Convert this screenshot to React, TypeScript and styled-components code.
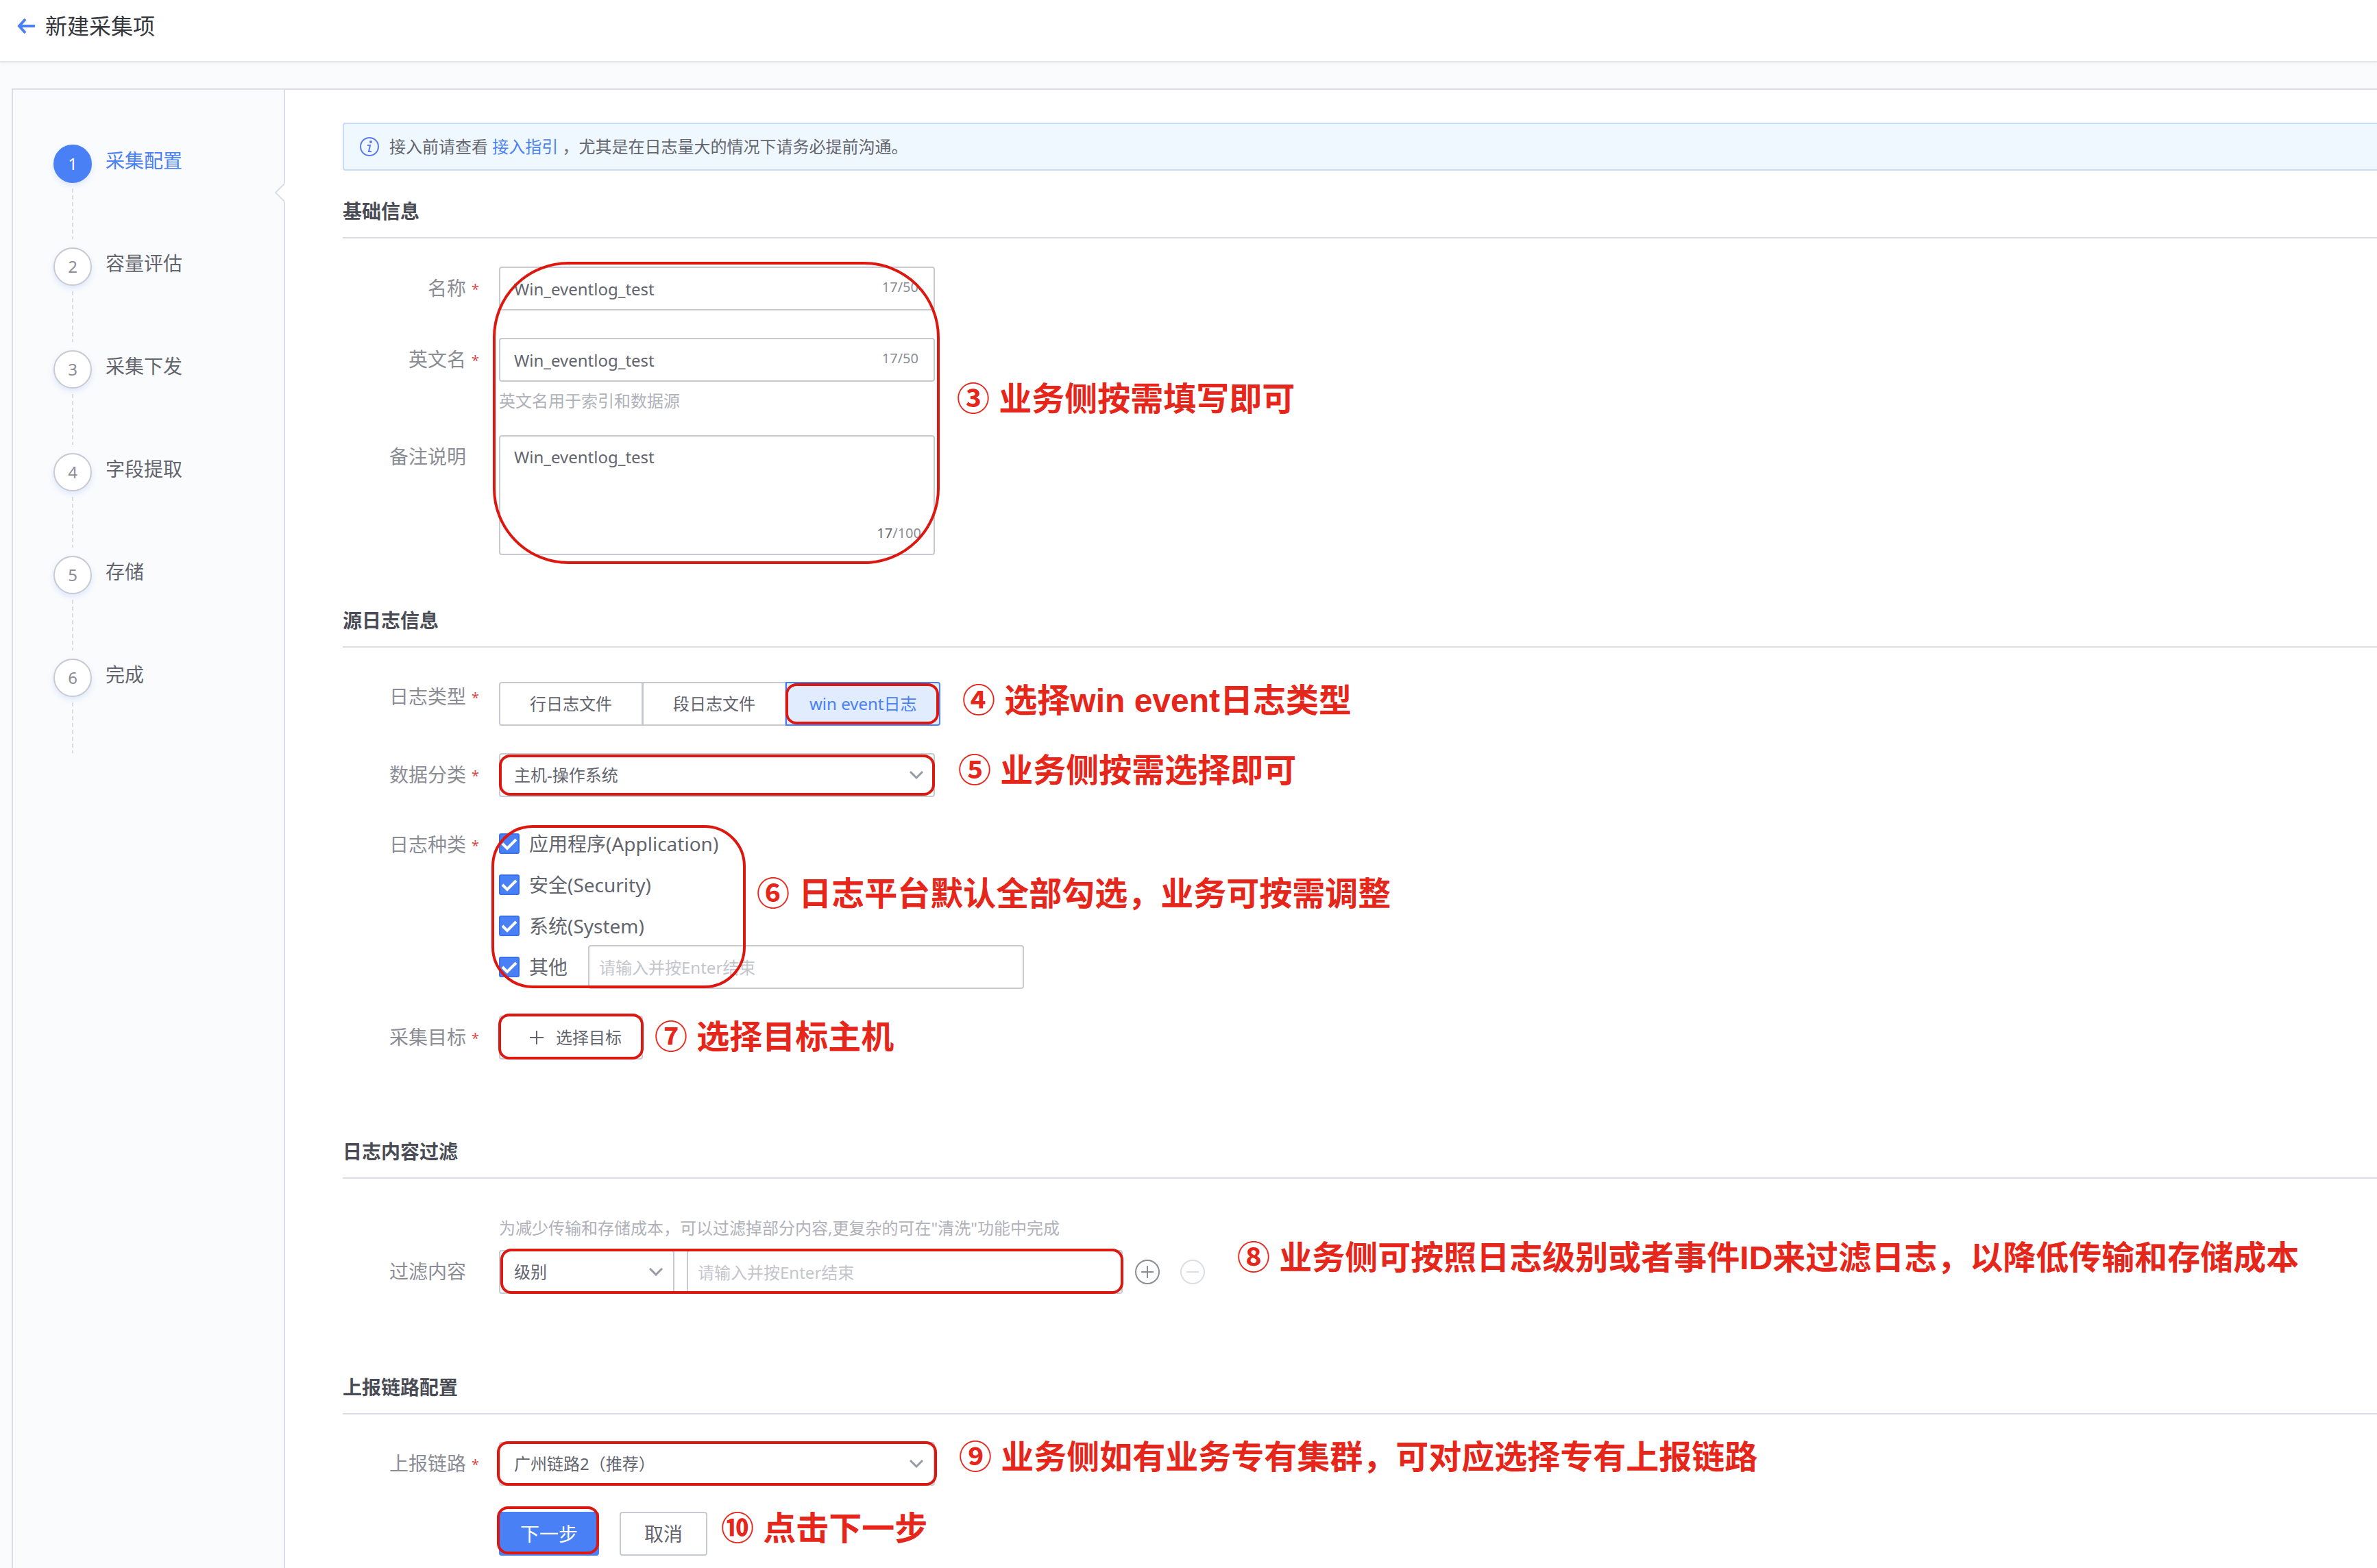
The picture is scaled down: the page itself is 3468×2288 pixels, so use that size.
import React from "react";
import styled, { createGlobalStyle, css } from "styled-components";

const color = {
  primary: "#4a80f5",
  primaryDark: "#3a70e8",
  text: "#63656e",
  heading: "#4a4c55",
  label: "#8b8d95",
  hint: "#b0b2ba",
  placeholder: "#c4c6cc",
  border: "#c8cad2",
  line: "#dcdee5",
  page: "#fafbfd",
  mark: "#dc1810",
};

const size = { counter: "20px", small: "24px", base: "28px", title: "32px", note: "48px" };

const GlobalStyle = createGlobalStyle`
  *, *::before, *::after { box-sizing: border-box; }
  body {
    margin: 0;
    background: ${color.page};
    color: ${color.text};
    font-family: "Noto Sans", "Noto Sans CJK SC", sans-serif;
    font-size: ${size.small};
    line-height: 32px;
    overflow-x: hidden;
  }
  button, input, select, textarea { font: inherit; color: inherit; }
`;

const Header = styled.header`
  display: flex;
  align-items: center;
  gap: 14px;
  height: 91px;
  padding: 0 24px 14px;
  background: #fff;
  border-bottom: 2px solid #e4e5e8;
  box-shadow: 0 2px 4px rgba(0, 0, 0, 0.04);
`;

const BackButton = styled.button`
  display: flex;
  padding: 0;
  border: 0;
  background: none;
  color: ${color.primary};
`;

const PageTitle = styled.h1`
  margin: 0;
  color: #36373d;
  font-size: ${size.title};
  font-weight: 400;
  line-height: 40px;
`;

const Panel = styled.div`
  display: flex;
  min-height: calc(100vh - 129px);
  margin: 38px 0 0 17px;
  border: solid ${color.line};
  border-width: 2px 0 0 2px;
`;

const Sidebar = styled.nav`
  position: relative;
  flex: 0 0 397px;
  padding: 80px 0 0 59px;
  border-right: 2px solid ${color.line};
`;

const Notch = styled.svg`
  position: absolute;
  top: 136px;
  right: -2px;
`;

const StepList = styled.ol`
  margin: 0;
  padding: 0;
  list-style: none;
`;

const Step = styled.li`
  display: grid;
  grid-template-columns: 56px 1fr;
  grid-template-rows: 56px 78px;
  row-gap: 8px;
  column-gap: 20px;
  height: 150px;
`;

const StepDot = styled.span<{ $active: boolean }>`
  display: flex;
  align-items: center;
  justify-content: center;
  border: 2px solid ${(p) => (p.$active ? color.primary : color.border)};
  border-radius: 50%;
  background: ${(p) => (p.$active ? color.primary : "#fff")};
  color: ${(p) => (p.$active ? "#fff" : color.label)};
  box-shadow: 0 4px 8px rgba(74, 128, 245, 0.16);
`;

const StepName = styled.span<{ $active: boolean }>`
  padding-top: 3px;
  color: ${(p) => (p.$active ? color.primary : color.text)};
  font-size: ${size.base};
  line-height: 40px;
`;

const StepLine = styled.span`
  justify-self: center;
  width: 2px;
  height: 74px;
  background: repeating-linear-gradient(${color.line} 0 6px, transparent 6px 10px);
`;

const Content = styled.main`
  flex: 1;
  min-width: 0;
  padding: 48px 0 16px 84px;
  background: #fff;
`;

const Alert = styled.div`
  display: flex;
  align-items: center;
  gap: 14px;
  height: 70px;
  margin-bottom: 39px;
  padding: 0 22px;
  border: 2px solid #c9dbfb;
  border-right: 0;
  border-radius: 4px 0 0 4px;
  background: #f0f8ff;
  a { color: ${color.primary}; text-decoration: none; }
`;

const Section = styled.section<{ $gap: number }>`
  margin-bottom: ${(p) => p.$gap}px;
`;

const SectionTitle = styled.h2<{ $space: number }>`
  margin: 0 0 ${(p) => p.$space}px;
  padding-bottom: 18px;
  border-bottom: 2px solid ${color.line};
  color: ${color.heading};
  font-size: ${size.base};
  font-weight: 700;
  line-height: 40px;
`;

const Row = styled.div<{ $gap: number }>`
  display: grid;
  grid-template-columns: 180px 1fr;
  column-gap: 48px;
  margin-bottom: ${(p) => p.$gap}px;
`;

const labelStyle = css`
  position: relative;
  height: 62px;
  color: ${color.label};
  font-size: ${size.base};
  line-height: 62px;
  text-align: right;
`;

const Label = styled.label`${labelStyle}`;
const GroupLabel = styled.span<{ $short?: boolean }>`
  ${labelStyle}
  ${(p) => p.$short && "line-height: 42px;"}
`;

const Star = styled.span`
  position: absolute;
  left: 100%;
  margin: 2px 0 0 8px;
  color: #dc4a4a;
  font-size: ${size.counter};
`;

const Anchor = styled.div`
  position: relative;
  width: max-content;
`;

const boxStyle = css`
  height: 64px;
  border: 2px solid ${color.border};
  border-radius: 4px;
  background: #fff;
  outline: none;
  &::placeholder { color: ${color.placeholder}; opacity: 1; }
`;

const TextInput = styled.input`
  ${boxStyle}
  display: block;
  width: 636px;
  padding: 0 100px 0 20px;
`;

const TagInput = styled.input`
  ${boxStyle}
  width: 636px;
  padding: 0 14px;
`;

const TextArea = styled.textarea`
  ${boxStyle}
  display: block;
  width: 636px;
  height: 175px;
  padding: 14px 20px;
  resize: none;
`;

const Counter = styled.span<{ $corner?: boolean }>`
  position: absolute;
  right: ${(p) => (p.$corner ? 20 : 24)}px;
  ${(p) => (p.$corner ? "bottom: 16px;" : "top: 14px;")}
  color: ${color.label};
  font-size: ${size.counter};
  b { color: ${color.text}; font-weight: 400; }
`;

const Hint = styled.p<{ $gap: number }>`
  margin: 12px 0 ${(p) => p.$gap}px;
  color: ${color.hint};
`;

const SelectWrap = styled.div<{ $width: number }>`
  position: relative;
  width: ${(p) => p.$width}px;
  svg {
    position: absolute;
    top: 26px;
    right: 17px;
    pointer-events: none;
  }
`;

const SelectBox = styled.select`
  ${boxStyle}
  display: block;
  width: 100%;
  padding: 0 20px;
  appearance: none;
`;

const ButtonGroup = styled.div`
  display: flex;
`;

const TypeButton = styled.button<{ $active?: boolean }>`
  min-width: 210px;
  height: 64px;
  padding: 0 33px;
  border: 2px solid ${color.border};
  background: #fff;
  & + & { margin-left: -1px; }
  &:first-child { border-radius: 4px 0 0 4px; }
  &:last-child { border-radius: 0 4px 4px 0; }
  ${(p) =>
    p.$active &&
    css`
      border-color: ${color.primary};
      background: #e1ecff;
      color: ${color.primary};
    `}
`;

const CheckLine = styled.div`
  display: flex;
  align-items: center;
  gap: 30px;
  height: 60px;
`;

const CheckLabel = styled.label`
  display: flex;
  align-items: center;
  gap: 14px;
  font-size: ${size.base};
`;

const CheckWrap = styled.span`
  position: relative;
  display: flex;
  svg {
    position: absolute;
    inset: 0;
    pointer-events: none;
  }
`;

const Checkbox = styled.input`
  width: 30px;
  height: 30px;
  margin: 0;
  appearance: none;
  border: 2px solid ${color.border};
  border-radius: 3px;
  &:checked {
    border-color: ${color.primaryDark};
    background: ${color.primary};
  }
`;

const TargetButton = styled.button`
  ${boxStyle}
  display: flex;
  align-items: center;
  justify-content: center;
  gap: 18px;
  width: 210px;
  padding: 0 0 0 14px;
`;

const FilterLine = styled.div`
  display: flex;
  align-items: center;
  gap: 18px;
`;

const IconButton = styled.button<{ $muted?: boolean }>`
  display: flex;
  padding: 0;
  border: 0;
  background: none;
  color: ${(p) => (p.$muted ? color.line : color.label)};
  & + & { margin-left: 12px; }
`;

const Actions = styled.div`
  display: flex;
  gap: 30px;
  margin-left: 228px;
`;

const ActionButton = styled.button<{ $primary?: boolean }>`
  ${boxStyle}
  padding: 0 ${(p) => (p.$primary ? 29 : 34)}px;
  font-size: ${size.base};
  ${(p) =>
    p.$primary &&
    css`
      border-color: ${color.primary};
      background: ${color.primary};
      color: #fff;
    `}
`;

/* Red frame and numbered note laid over the form as step-by-step guidance. */
const Mark = styled.span<{ $inset: string; $radius?: number }>`
  position: absolute;
  z-index: 1;
  inset: ${(p) => p.$inset};
  border: 4px solid ${color.mark};
  border-radius: ${(p) => p.$radius ?? 16}px;
  pointer-events: none;
`;

const Note = styled.strong<{ $left: number; $top: number }>`
  position: absolute;
  z-index: 1;
  left: ${(p) => p.$left}px;
  top: ${(p) => p.$top}px;
  color: #e6261a;
  font-family: "Liberation Sans", "Noto Sans CJK SC", sans-serif;
  font-size: ${size.note};
  font-weight: 700;
  line-height: 64px;
  white-space: nowrap;
`;

const Chevron = () => (
  <svg width="20" height="13" viewBox="0 0 20 13" fill="none" stroke="#979ba5" strokeWidth="3">
    <path d="M1 1l9 9 9-9" />
  </svg>
);

const Tick = () => (
  <svg width="30" height="30" viewBox="0 0 30 30" fill="none" stroke="#fff" strokeWidth="4">
    <path d="M5 15l7 7L25 9" />
  </svg>
);

const steps = ["采集配置", "容量评估", "采集下发", "字段提取", "存储", "完成"];
const kinds = ["应用程序(Application)", "安全(Security)", "系统(System)"];

function Check({ id, text }: { id: string; text: string }) {
  return (
    <CheckLabel htmlFor={id}>
      <CheckWrap>
        <Checkbox id={id} type="checkbox" defaultChecked />
        <Tick />
      </CheckWrap>
      {text}
    </CheckLabel>
  );
}

function Select({ id, width, value }: { id: string; width: number; value: string }) {
  return (
    <SelectWrap $width={width}>
      <SelectBox id={id}>
        <option>{value}</option>
      </SelectBox>
      <Chevron />
    </SelectWrap>
  );
}

export default function App() {
  return (
    <>
      <GlobalStyle />
      <Header>
        <BackButton aria-label="返回">
          <svg width="28" height="24" viewBox="0 0 28 24" fill="none" stroke="currentColor" strokeWidth="4">
            <path d="M13 2L4 12l9 10M4 12h23" />
          </svg>
        </BackButton>
        <PageTitle>新建采集项</PageTitle>
      </Header>
      <Panel>
        <Sidebar>
          <StepList>
            {steps.map((name, i) => (
              <Step key={name}>
                <StepDot $active={i === 0}>{i + 1}</StepDot>
                <StepName $active={i === 0}>{name}</StepName>
                <StepLine />
              </Step>
            ))}
          </StepList>
          <Notch width="16" height="28" viewBox="0 0 16 28" fill="#fff">
            <path d="M16 0L2 14l14 14" />
            <path d="M15 1L2 14l13 13" fill="none" stroke={color.line} strokeWidth="2" />
          </Notch>
        </Sidebar>
        <Content>
          <Alert>
            <svg width="30" height="30" viewBox="0 0 30 30" fill="none" stroke="#5b7cf0" strokeWidth="2">
              <circle cx="15" cy="15" r="13" />
              <path d="M12 13h4l-2 9h4" />
              <circle cx="17" cy="8" r="1" />
            </svg>
            <span>
              接入前请查看 <a href="#guide">接入指引</a> ，尤其是在日志量大的情况下请务必提前沟通。
            </span>
          </Alert>

          <Section $gap={75}>
            <SectionTitle $space={41}>基础信息</SectionTitle>
            <Anchor>
              <Row $gap={40}>
                <Label htmlFor="name">名称<Star>*</Star></Label>
                <Anchor>
                  <TextInput id="name" defaultValue="Win_eventlog_test" />
                  <Counter>17/50</Counter>
                </Anchor>
              </Row>
              <Row $gap={34}>
                <Label htmlFor="en-name">英文名<Star>*</Star></Label>
                <div>
                  <Anchor>
                    <TextInput id="en-name" defaultValue="Win_eventlog_test" />
                    <Counter>17/50</Counter>
                  </Anchor>
                  <Hint $gap={0}>英文名用于索引和数据源</Hint>
                </div>
              </Row>
              <Row $gap={0}>
                <Label htmlFor="note">备注说明</Label>
                <Anchor>
                  <TextArea id="note" defaultValue="Win_eventlog_test" />
                  <Counter $corner><b>17</b>/100</Counter>
                </Anchor>
              </Row>
              <Mark $inset="-7px -7px -13px 219px" $radius={110} />
              <Note $left={896} $top={162}>③ 业务侧按需填写即可</Note>
            </Anchor>
          </Section>

          <Section $gap={114}>
            <SectionTitle $space={50}>源日志信息</SectionTitle>
            <Row $gap={40}>
              <GroupLabel $short>日志类型<Star>*</Star></GroupLabel>
              <Anchor>
                <ButtonGroup>
                  <TypeButton>行日志文件</TypeButton>
                  <TypeButton>段日志文件</TypeButton>
                  <TypeButton $active>win event日志</TypeButton>
                </ButtonGroup>
                <Mark $inset="2px 2px 2px 418px" />
                <Note $left={676} $top={-4}>④ 选择win event日志类型</Note>
              </Anchor>
            </Row>
            <Row $gap={38}>
              <Label htmlFor="category">数据分类<Star>*</Star></Label>
              <Anchor>
                <Select id="category" width={636} value="主机-操作系统" />
                <Mark $inset="2px 0 2px 0" />
                <Note $left={670} $top={-6}>⑤ 业务侧按需选择即可</Note>
              </Anchor>
            </Row>
            <Row $gap={41}>
              <GroupLabel>日志种类<Star>*</Star></GroupLabel>
              <Anchor>
                {kinds.map((kind, i) => (
                  <CheckLine key={kind}>
                    <Check id={`kind-${i}`} text={kind} />
                  </CheckLine>
                ))}
                <CheckLine>
                  <Check id="kind-other" text="其他" />
                  <TagInput aria-label="其他日志种类" placeholder="请输入并按Enter结束" />
                </CheckLine>
                <Mark $inset="3px 406px -1px -11px" $radius={60} />
                <Note $left={376} $top={72}>⑥ 日志平台默认全部勾选，业务可按需调整</Note>
              </Anchor>
            </Row>
            <Row $gap={0}>
              <GroupLabel>采集目标<Star>*</Star></GroupLabel>
              <Anchor>
                <TargetButton>
                  <svg width="20" height="24" viewBox="0 0 20 24" fill="none" stroke="currentColor" strokeWidth="2">
                    <path d="M10 2v20M0 12h20" />
                  </svg>
                  选择目标
                </TargetButton>
                <Mark $inset="-3px -1px 0 -1px" />
                <Note $left={227} $top={0}>⑦ 选择目标主机</Note>
              </Anchor>
            </Row>
          </Section>

          <Section $gap={116}>
            <SectionTitle $space={44}>日志内容过滤</SectionTitle>
            <Row $gap={0}>
              <span />
              <Hint $gap={16}>为减少传输和存储成本，可以过滤掉部分内容,更复杂的可在"清洗"功能中完成</Hint>
              <Label htmlFor="filter">过滤内容</Label>
              <Anchor>
                <FilterLine>
                  <Select id="filter" width={256} value="级别" />
                  <TagInput aria-label="过滤值" placeholder="请输入并按Enter结束" />
                  <IconButton aria-label="添加">
                    <svg width="36" height="36" viewBox="0 0 36 36" fill="none" stroke="currentColor" strokeWidth="2">
                      <circle cx="18" cy="18" r="17" />
                      <path d="M18 9v18M9 18h18" />
                    </svg>
                  </IconButton>
                  <IconButton aria-label="删除" $muted>
                    <svg width="36" height="36" viewBox="0 0 36 36" fill="none" stroke="currentColor" strokeWidth="2">
                      <circle cx="18" cy="18" r="17" />
                      <path d="M9 18h18" />
                    </svg>
                  </IconButton>
                </FilterLine>
                <Mark $inset="-2px 119px 0 2px" />
                <Note $left={1077} $top={-20}>⑧ 业务侧可按照日志级别或者事件ID来过滤日志，以降低传输和存储成本</Note>
              </Anchor>
            </Row>
          </Section>

          <Section $gap={0}>
            <SectionTitle $space={40}>上报链路配置</SectionTitle>
            <Row $gap={38}>
              <Label htmlFor="link">上报链路<Star>*</Star></Label>
              <Anchor>
                <Select id="link" width={636} value="广州链路2（推荐）" />
                <Mark $inset="-1px -3px 0 -3px" />
                <Note $left={671} $top={-9}>⑨ 业务侧如有业务专有集群，可对应选择专有上报链路</Note>
              </Anchor>
            </Row>
            <Actions>
              <Anchor>
                <ActionButton $primary>下一步</ActionButton>
                <Mark $inset="-8px 0 2px -3px" />
              </Anchor>
              <Anchor>
                <ActionButton>取消</ActionButton>
                <Note $left={148} $top={-7}>⑩ 点击下一步</Note>
              </Anchor>
            </Actions>
          </Section>
        </Content>
      </Panel>
    </>
  );
}
